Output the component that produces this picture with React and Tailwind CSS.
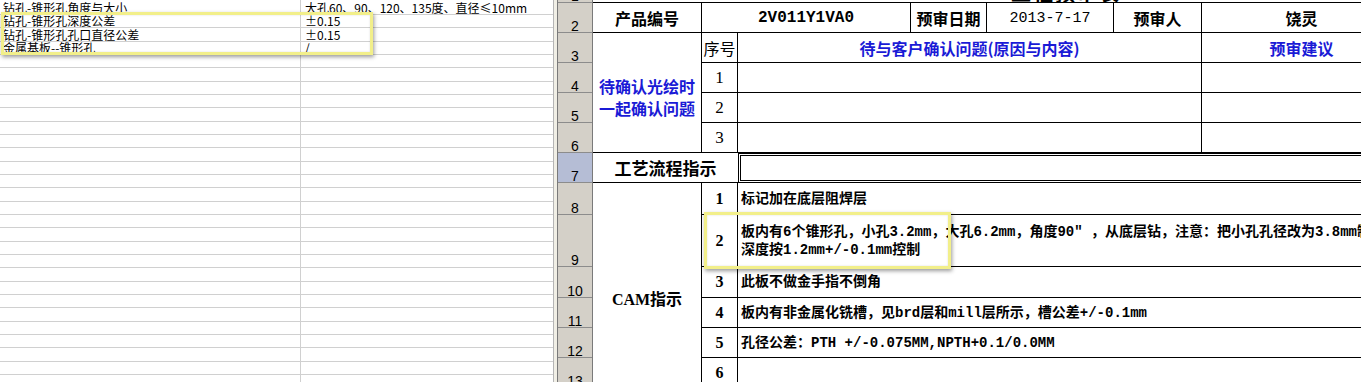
import React from 'react';

const CJK = "font-['Noto_Sans_CJK_SC',sans-serif]";
const MONO = "font-['Liberation_Mono','Noto_Sans_CJK_SC',monospace]";
const SERIF = "font-['Liberation_Serif','Noto_Sans_CJK_SC',serif]";
const CELL = 'border-r border-b border-black overflow-hidden';
const BLUE = 'text-[#1a1ad6]';

const LEFT_ROWS = [
  ['钻孔-锥形孔角度与大小', '大孔60、90、120、135度、直径≤10mm'],
  ['钻孔-锥形孔深度公差', '±0.15'],
  ['钻孔-锥形孔孔口直径公差', '±0.15'],
  ['金属基板--锥形孔', '/'],
  ...Array.from({ length: 26 }, () => ['', '']),
];

// row header heights, written out so tailwind picks them up
const HEADS = [
  { n: '1', h: 'h-[3px]' },
  { n: '2', h: 'h-[30px]' },
  { n: '3', h: 'h-[30px]' },
  { n: '4', h: 'h-[30px]' },
  { n: '5', h: 'h-[30px]' },
  { n: '6', h: 'h-[30px]' },
  { n: '7', h: 'h-[30px]', active: true },
  { n: '8', h: 'h-[32px]' },
  { n: '9', h: 'h-[52px]' },
  { n: '10', h: 'h-[31px]' },
  { n: '11', h: 'h-[30px]' },
  { n: '12', h: 'h-[30px]' },
  { n: '13', h: 'h-[30px]' },
  { n: '14', h: 'h-[30px]' },
];

const CAM_ROWS = [
  { n: '1', lines: ['标记加在底层阻焊层'] },
  {
    n: '2',
    lines: [
      '板内有6个锥形孔，小孔3.2mm，大孔6.2mm，角度90" ，从底层钻，注意：把小孔孔径改为3.8mm制作',
      '深度按1.2mm+/-0.1mm控制',
    ],
  },
  { n: '3', lines: ['此板不做金手指不倒角'] },
  { n: '4', lines: ['板内有非金属化铣槽，见brd层和mill层所示，槽公差+/-0.1mm'] },
  { n: '5', lines: ['孔径公差：PTH +/-0.075MM,NPTH+0.1/0.0MM'] },
  { n: '6', lines: [] },
  { n: '', lines: [] },
];

const Highlight = ({ className }) => (
  <div
    className={`pointer-events-none absolute border-[3px] border-[#f2ef8a] shadow-[1px_2px_4px_rgba(0,0,0,0.4),inset_0_0_2px_rgba(0,0,0,0.15)] ${className}`}
  />
);

export default function App() {
  return (
    <div className="relative flex w-[1361px] h-[382px] overflow-hidden bg-white text-black">
      {/* ── left sheet ── */}
      <div className={`w-[553px] shrink-0 overflow-hidden ${CJK} text-[12px]`}>
        {LEFT_ROWS.map((row, i) => (
          <div
            key={i}
            className={`flex border-b border-[#d0d0d0] ${i === 0 ? 'h-[15px] items-end' : 'h-[13.333px] items-center'}`}
          >
            <div className="w-[301px] h-full shrink-0 border-r border-[#d0d0d0] pl-[3px] leading-[13px] whitespace-nowrap flex items-end">
              {row[0]}
            </div>
            <div className="flex-1 h-full pl-[4px] leading-[13px] whitespace-nowrap flex items-end">
              {row[1]}
            </div>
          </div>
        ))}
      </div>

      {/* split bar */}
      <div className="w-[5px] shrink-0 bg-[#f1efe6] border-l border-l-[#b5b5b5] border-r border-r-[#7a7a7a]" />

      {/* ── right sheet ── */}
      <div className="flex flex-1 min-w-0 overflow-hidden">
        <div className="w-[35px] shrink-0 flex flex-col border-r border-[#7a7a7a] font-['Liberation_Sans',sans-serif] text-[14px]">
          {HEADS.map((r) => (
            <div
              key={r.n}
              className={`${r.h} shrink-0 overflow-hidden flex items-end justify-center leading-[12px] border-b border-[#8c8c8c] ${r.active ? 'bg-[#b5bdd5]' : 'bg-[#d4d0c8]'}`}
            >
              {r.n}
            </div>
          ))}
        </div>

        <div className="shrink-0 grid grid-cols-[109px_36px_173px_76px_127px_88px_200px] grid-rows-[3px_30px_30px_30px_30px_30px_30px_32px_52px_31px_30px_30px_30px_30px]">
          {/* row 1 (title, scrolled off) */}
          <div className={`col-span-7 border-b border-black overflow-hidden flex items-end pl-[418px] ${CJK}`}>
            <span className="text-[20px] leading-[19px] font-bold tracking-[2px] whitespace-nowrap">工程预审表</span>
          </div>

          {/* row 2 */}
          <div className={`${CELL} flex items-center justify-center ${CJK} font-bold text-[16px]`}>产品编号</div>
          <div className={`col-span-2 ${CELL} flex items-center justify-center ${MONO} font-bold text-[16px]`}>2V011Y1VA0</div>
          <div className={`${CELL} flex items-center justify-center ${CJK} font-bold text-[16px]`}>预审日期</div>
          <div className={`${CELL} flex items-center justify-center pt-[3px] ${MONO} text-[15px]`}>2013-7-17</div>
          <div className={`${CELL} flex items-center justify-center ${CJK} font-bold text-[16px]`}>预审人</div>
          <div className={`${CELL} flex items-center justify-center ${CJK} font-bold text-[16px]`}>饶灵</div>

          {/* rows 3-6 */}
          <div className={`row-span-4 ${CELL} flex items-center justify-center ${CJK} ${BLUE} font-bold text-[16px] leading-[22px] text-center pt-[8px]`}>
            待确认光绘时
            <br />
            一起确认问题
          </div>
          <div className={`${CELL} flex items-center justify-center ${CJK} text-[16px]`}>序号</div>
          <div className={`col-span-4 ${CELL} flex items-center justify-center ${CJK} ${BLUE} font-bold text-[16px]`}>
            待与客户确认问题(原因与内容)
          </div>
          <div className={`${CELL} flex items-center justify-center ${CJK} ${BLUE} font-bold text-[16px]`}>预审建议</div>
          {['1', '2', '3'].map((n) => (
            <React.Fragment key={n}>
              <div className={`${CELL} flex items-center justify-center ${SERIF} text-[17px]`}>{n}</div>
              <div className={`col-span-4 ${CELL}`} />
              <div className={CELL} />
            </React.Fragment>
          ))}

          {/* row 7 */}
          <div className={`col-span-2 border-b border-black flex items-center justify-center ${CJK} font-bold text-[17px]`}>
            工艺流程指示
          </div>
          <div className="col-span-5 border-[3px] border-double border-black" />

          {/* rows 8-14 */}
          <div className={`row-span-7 ${CELL} flex items-center justify-center ${SERIF} font-bold text-[16px]`}>CAM指示</div>
          {CAM_ROWS.map((r, i) => (
            <React.Fragment key={i}>
              <div className={`${CELL} flex items-center justify-center ${SERIF} font-bold text-[16px]`}>{r.n}</div>
              <div className={`col-span-5 ${CELL} flex flex-col justify-center pl-[3px] ${MONO} font-bold text-[14px] leading-[18px]`}>
                {r.lines.map((l, j) => (
                  <div key={j} className="whitespace-nowrap">
                    {l}
                  </div>
                ))}
              </div>
            </React.Fragment>
          ))}
        </div>
      </div>

      <Highlight className="left-[1px] top-[12px] w-[372px] h-[43px]" />
      <Highlight className="left-[704px] top-[212px] w-[247px] h-[57px]" />
    </div>
  );
}
